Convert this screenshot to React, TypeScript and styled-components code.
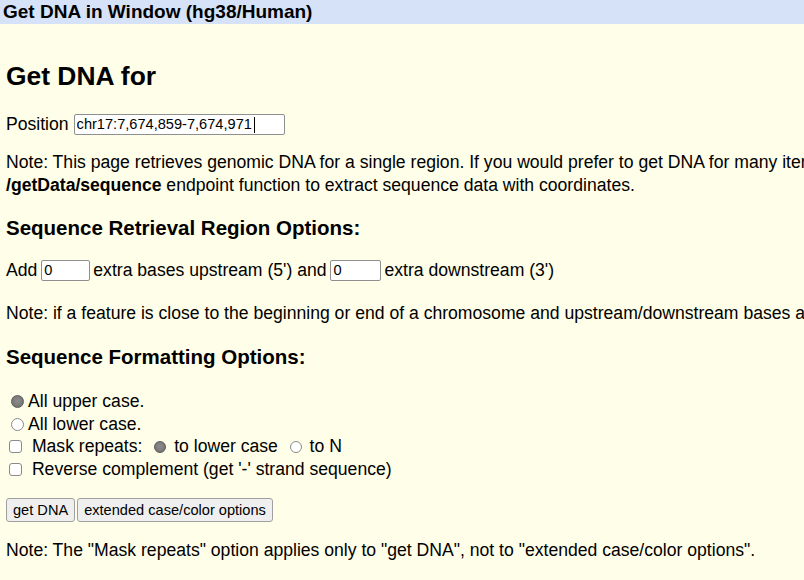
import React from "react";
import styled, { createGlobalStyle } from "styled-components";

const Global = createGlobalStyle`
  html, body { margin: 0; padding: 0; background: #fffee8; }
  body { font-family: "Liberation Sans", Arial, sans-serif; color: #000; overflow: hidden; }
`;

const Page = styled.div`
  width: 804px;
  height: 580px;
  background: #fffee8;
  overflow: hidden;
`;

const TitleBar = styled.div`
  height: 24px;
  background: #d6e2f8;
  font-weight: bold;
  font-size: 19px;
  line-height: 24px;
  padding-left: 3px;
  white-space: nowrap;
`;

const Content = styled.div`
  padding: 0 6px;
  white-space: nowrap;
  font-size: 17.6px;
`;

const H2 = styled.h2`
  font-size: 26.4px;
  font-weight: bold;
  margin: 37px 0 0 0;
  line-height: 30px;
`;

const H3 = styled.h3<{ $top: number }>`
  font-size: 20.5px;
  font-weight: bold;
  margin: ${(p) => p.$top}px 0 0 0;
  line-height: 24px;
`;

const Para = styled.div<{ $top: number }>`
  margin-top: ${(p) => p.$top}px;
  line-height: 23px;
`;

const Row = styled.div<{ $top: number }>`
  margin-top: ${(p) => p.$top}px;
  display: flex;
  align-items: center;
  height: 22px;
  line-height: 22px;
`;

const FieldWrap = styled.span<{ $ml: number; $mr: number }>`
  position: relative;
  display: inline-flex;
  margin: 0 ${(p) => p.$mr}px 0 ${(p) => p.$ml}px;
`;

const TextField = styled.input<{ $w: number }>`
  width: ${(p) => p.$w}px;
  height: 21px;
  box-sizing: border-box;
  border: 1px solid #8f8f8f;
  border-radius: 2px;
  background: #fff;
  font-family: "Liberation Sans", Arial, sans-serif;
  font-size: 14.6px;
  padding: 0 2px;
  margin: 0;
  outline: none;
  color: #000;
`;

const Caret = styled.span`
  position: absolute;
  width: 1px;
  height: 16px;
  background: #000;
  top: 3px;
`;

const OptList = styled.div`
  margin-top: 21px;
`;

const OptRow = styled.label`
  display: block;
  height: 22.67px;
  line-height: 22.67px;
`;

const Radio = styled.span<{ $on?: boolean; $size: number; $ml: number; $mr: number }>`
  display: inline-block;
  width: ${(p) => p.$size}px;
  height: ${(p) => p.$size}px;
  box-sizing: border-box;
  border-radius: 50%;
  border: 1px solid ${(p) => (p.$on ? "#5a5a5a" : "#8a8a8a")};
  background: ${(p) =>
    p.$on ? "radial-gradient(circle at 50% 45%, #8c8c8c 0, #7b7b7b 55%, #666 100%)" : "#fff"};
  margin: 0 ${(p) => p.$mr}px 0 ${(p) => p.$ml}px;
  vertical-align: -1px;
`;

const Check = styled.span`
  display: inline-block;
  width: 13px;
  height: 13px;
  box-sizing: border-box;
  border: 1px solid #8a8a8a;
  border-radius: 3px;
  background: #fff;
  margin: 0 5px 0 3px;
  vertical-align: -1px;
`;

const Buttons = styled.div`
  margin-top: 17px;
  display: flex;
  gap: 2px;
`;

const Button = styled.button`
  height: 24px;
  box-sizing: border-box;
  border: 1px solid #a0a0a0;
  border-radius: 3px;
  background: #efefef;
  font-family: "Liberation Sans", Arial, sans-serif;
  font-size: 14.6px;
  color: #000;
  padding: 0 6px;
`;

export default function App() {
  return (
    <Page>
      <Global />
      <TitleBar>Get DNA in Window (hg38/Human)</TitleBar>
      <Content>
        <H2>Get DNA for</H2>
        <Row $top={22}>
          Position
          <FieldWrap $ml={5} $mr={0}>
            <TextField $w={211} readOnly value="chr17:7,674,859-7,674,971" />
            <Caret style={{ left: 180 }} />
          </FieldWrap>
        </Row>
        <Para $top={16}>
          Note: This page retrieves genomic DNA for a single region. If you would prefer to get DNA for many items in a particular track, or get DNA with formatting options based on gene structure (introns, exons, UTRs, etc.), or use the API
          <br />
          <b>/getData/sequence</b> endpoint function to extract sequence data with coordinates.
        </Para>
        <H3 $top={19}>Sequence Retrieval Region Options:</H3>
        <Row $top={19}>
          Add
          <FieldWrap $ml={4} $mr={3}>
            <TextField $w={49} readOnly value="0" />
          </FieldWrap>
          extra bases upstream (5') and
          <FieldWrap $ml={4} $mr={3}>
            <TextField $w={51} readOnly value="0" />
          </FieldWrap>
          extra downstream (3')
        </Row>
        <Para $top={21}>
          Note: if a feature is close to the beginning or end of a chromosome and upstream/downstream bases are added, they may be truncated in order to avoid extending past the edge of the chromosome.
        </Para>
        <H3 $top={20}>Sequence Formatting Options:</H3>
        <OptList>
          <OptRow>
            <Radio $on $size={13} $ml={5} $mr={4} />
            All upper case.
          </OptRow>
          <OptRow>
            <Radio $size={13} $ml={5} $mr={4} />
            All lower case.
          </OptRow>
          <OptRow>
            <Check /> Mask repeats: <Radio $on $size={12} $ml={7} $mr={3} /> to lower case{" "}
            <Radio $size={12} $ml={7} $mr={3} /> to N
          </OptRow>
          <OptRow>
            <Check /> Reverse complement (get '-' strand sequence)
          </OptRow>
        </OptList>
        <Buttons>
          <Button>get DNA</Button>
          <Button>extended case/color options</Button>
        </Buttons>
        <Para $top={17}>
          Note: The "Mask repeats" option applies only to "get DNA", not to "extended case/color options".
        </Para>
      </Content>
    </Page>
  );
}
